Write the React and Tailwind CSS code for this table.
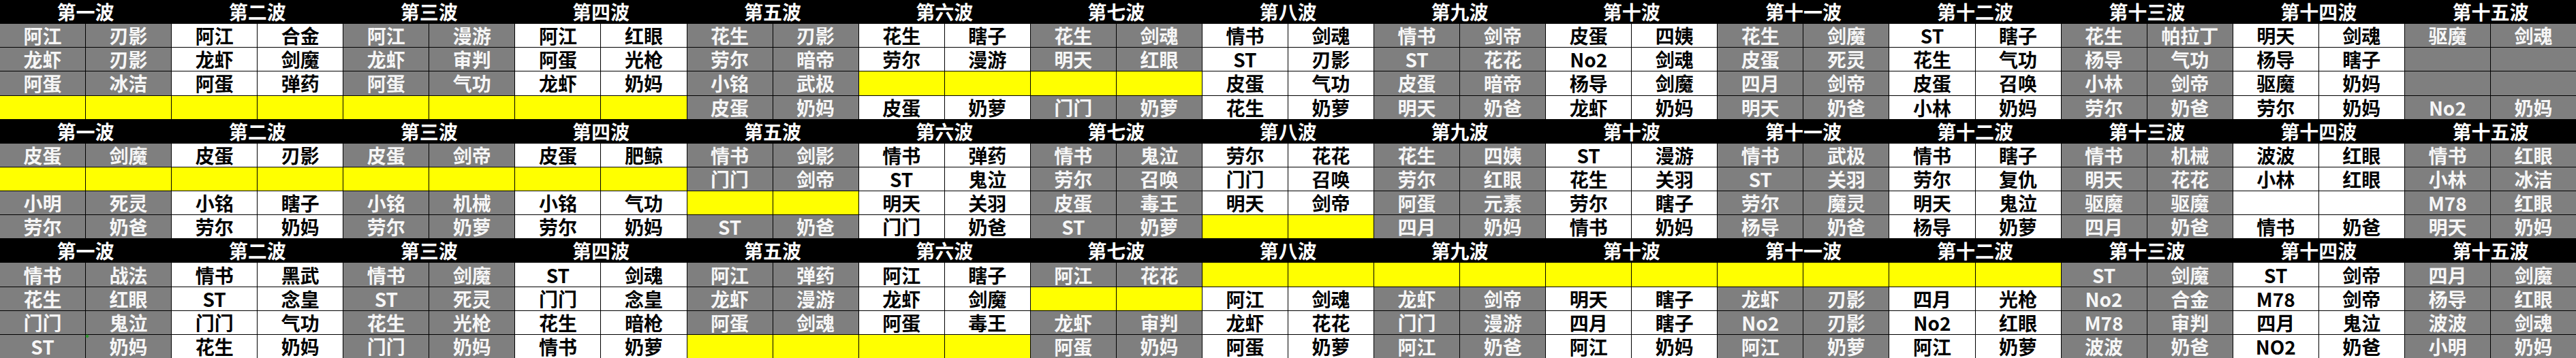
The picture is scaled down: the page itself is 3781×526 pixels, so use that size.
import React from "react";

const WAVES = [
  "第一波", "第二波", "第三波", "第四波", "第五波", "第六波", "第七波", "第八波",
  "第九波", "第十波", "第十一波", "第十二波", "第十三波", "第十四波", "第十五波",
];

// Y = 黄色空行, each wave is 4 rows of [name, job]
const Y = "Y";
const E = ["", ""];

const SECTIONS = [
  [
    [["阿江", "刃影"], ["龙虾", "刃影"], ["阿蛋", "冰洁"], Y],
    [["阿江", "合金"], ["龙虾", "剑魔"], ["阿蛋", "弹药"], Y],
    [["阿江", "漫游"], ["龙虾", "审判"], ["阿蛋", "气功"], Y],
    [["阿江", "红眼"], ["阿蛋", "光枪"], ["龙虾", "奶妈"], Y],
    [["花生", "刃影"], ["劳尔", "暗帝"], ["小铭", "武极"], ["皮蛋", "奶妈"]],
    [["花生", "瞎子"], ["劳尔", "漫游"], Y, ["皮蛋", "奶萝"]],
    [["花生", "剑魂"], ["明天", "红眼"], Y, ["门门", "奶萝"]],
    [["情书", "剑魂"], ["ST", "刃影"], ["皮蛋", "气功"], ["花生", "奶萝"]],
    [["情书", "剑帝"], ["ST", "花花"], ["皮蛋", "暗帝"], ["明天", "奶爸"]],
    [["皮蛋", "四姨"], ["No2", "剑魂"], ["杨导", "剑魔"], ["龙虾", "奶妈"]],
    [["花生", "剑魔"], ["皮蛋", "死灵"], ["四月", "剑帝"], ["明天", "奶爸"]],
    [["ST", "瞎子"], ["花生", "气功"], ["皮蛋", "召唤"], ["小林", "奶妈"]],
    [["花生", "帕拉丁"], ["杨导", "气功"], ["小林", "剑帝"], ["劳尔", "奶爸"]],
    [["明天", "剑魂"], ["杨导", "瞎子"], ["驱魔", "奶妈"], ["劳尔", "奶妈"]],
    [["驱魔", "剑魂"], E, E, ["No2", "奶妈"]],
  ],
  [
    [["皮蛋", "剑魔"], Y, ["小明", "死灵"], ["劳尔", "奶爸"]],
    [["皮蛋", "刃影"], Y, ["小铭", "瞎子"], ["劳尔", "奶妈"]],
    [["皮蛋", "剑帝"], Y, ["小铭", "机械"], ["劳尔", "奶萝"]],
    [["皮蛋", "肥鲸"], Y, ["小铭", "气功"], ["劳尔", "奶妈"]],
    [["情书", "剑影"], ["门门", "剑帝"], Y, ["ST", "奶爸"]],
    [["情书", "弹药"], ["ST", "鬼泣"], ["明天", "关羽"], ["门门", "奶爸"]],
    [["情书", "鬼泣"], ["劳尔", "召唤"], ["皮蛋", "毒王"], ["ST", "奶萝"]],
    [["劳尔", "花花"], ["门门", "召唤"], ["明天", "剑帝"], Y],
    [["花生", "四姨"], ["劳尔", "红眼"], ["阿蛋", "元素"], ["四月", "奶妈"]],
    [["ST", "漫游"], ["花生", "关羽"], ["劳尔", "瞎子"], ["情书", "奶妈"]],
    [["情书", "武极"], ["ST", "关羽"], ["劳尔", "魔灵"], ["杨导", "奶爸"]],
    [["情书", "瞎子"], ["劳尔", "复仇"], ["明天", "鬼泣"], ["杨导", "奶萝"]],
    [["情书", "机械"], ["明天", "花花"], ["驱魔", "驱魔"], ["四月", "奶爸"]],
    [["波波", "红眼"], ["小林", "红眼"], E, ["情书", "奶爸"]],
    [["情书", "红眼"], ["小林", "冰洁"], ["M78", "红眼"], ["明天", "奶妈"]],
  ],
  [
    [["情书", "战法"], ["花生", "红眼"], ["门门", "鬼泣"], ["ST", "奶妈"]],
    [["情书", "黑武"], ["ST", "念皇"], ["门门", "气功"], ["花生", "奶妈"]],
    [["情书", "剑魔"], ["ST", "死灵"], ["花生", "光枪"], ["门门", "奶妈"]],
    [["ST", "剑魂"], ["门门", "念皇"], ["花生", "暗枪"], ["情书", "奶萝"]],
    [["阿江", "弹药"], ["龙虾", "漫游"], ["阿蛋", "剑魂"], Y],
    [["阿江", "瞎子"], ["龙虾", "剑魔"], ["阿蛋", "毒王"], Y],
    [["阿江", "花花"], Y, ["龙虾", "审判"], ["阿蛋", "奶妈"]],
    [Y, ["阿江", "剑魂"], ["龙虾", "花花"], ["阿蛋", "奶萝"]],
    [Y, ["龙虾", "剑帝"], ["门门", "漫游"], ["阿江", "奶爸"]],
    [Y, ["明天", "瞎子"], ["四月", "瞎子"], ["阿江", "奶妈"]],
    [Y, ["龙虾", "刃影"], ["No2", "刃影"], ["阿江", "奶萝"]],
    [Y, ["四月", "光枪"], ["No2", "红眼"], ["阿江", "奶萝"]],
    [["ST", "剑魔"], ["No2", "合金"], ["M78", "审判"], ["波波", "奶爸"]],
    [["ST", "剑帝"], ["M78", "剑帝"], ["四月", "鬼泣"], ["NO2", "奶爸"]],
    [["四月", "剑魔"], ["杨导", "红眼"], ["波波", "剑魂"], ["小明", "奶妈"]],
  ],
];

function Cell({ text, yellow, gray, mark }) {
  if (yellow) return <div className="bg-[#ffff00]" />;
  return (
    <div
      className={
        "relative flex items-center justify-center text-[28px] font-bold leading-[34px] " +
        (gray ? "bg-[#7f7f7f] text-[#f6f6f6]" : "bg-white text-black")
      }
    >
      {mark && (
        <span className="absolute left-0 top-0 w-[4px] h-[4px] bg-[#2e9a2e] rotate-45" />
      )}
      {text}
    </div>
  );
}

export default function App() {
  const cells = [];
  SECTIONS.forEach((waves, s) => {
    WAVES.forEach((w, i) => {
      cells.push(
        <div
          key={`h${s}-${i}`}
          className="col-span-2 flex items-center justify-center bg-black text-white text-[28px] font-bold leading-[34px]"
        >
          {w}
        </div>
      );
    });
    for (let r = 0; r < 4; r++) {
      waves.forEach((rows, i) => {
        const row = rows[r];
        const gray = i % 2 === 0;
        if (row === Y) {
          cells.push(<Cell key={`c${s}-${r}-${i}-a`} yellow />);
          cells.push(<Cell key={`c${s}-${r}-${i}-b`} yellow />);
        } else {
          cells.push(<Cell key={`c${s}-${r}-${i}-a`} text={row[0]} gray={gray} />);
          cells.push(
            <Cell
              key={`c${s}-${r}-${i}-b`}
              text={row[1]}
              gray={gray}
              mark={s === 2 && r === 3 && i === 0}
            />
          );
        }
      });
    }
  });

  return (
    <div
      className="grid grid-cols-30 grid-rows-15 gap-px bg-black w-[3781px] h-[526px]"
      style={{ fontFamily: '"Noto Sans CJK SC", "Noto Sans", sans-serif' }}
    >
      {cells}
    </div>
  );
}
